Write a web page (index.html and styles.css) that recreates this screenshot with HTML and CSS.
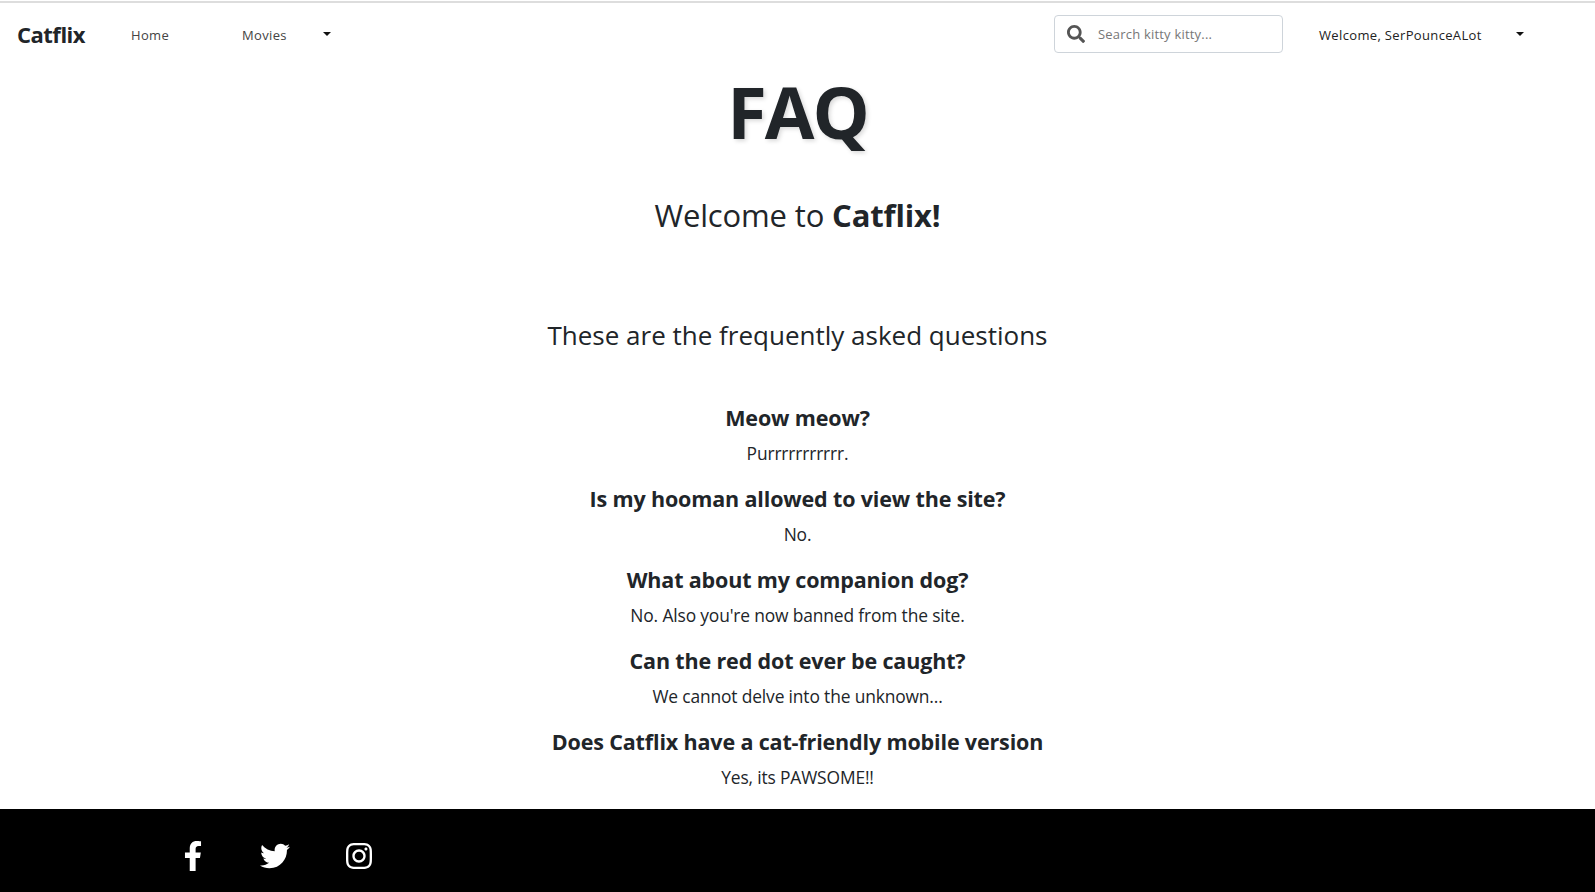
FILE: index.html
```html
<!DOCTYPE html>
<html>
<head>
<meta charset="utf-8">
<title>Catflix - FAQ</title>
<link rel="stylesheet" href="styles.css">
</head>
<body>
  <nav class="navbar">
    <a class="brand" href="#">Catflix</a>
    <a class="nav-link home-link" href="#">Home</a>
    <a class="nav-link movies-link" href="#">Movies</a>
    <span class="caret movies-caret"></span>
    <div class="search-box">
      <svg class="search-icon" viewBox="0 0 512 512"><path d="M505 442.700L405.300 343c-4.500-4.500-10.600-7-17-7H372c27.600-35.300 44-79.700 44-128C416 93.100 322.900 0 208 0S0 93.100 0 208s93.100 208 208 208c48.300 0 92.700-16.400 128-44v16.300c0 6.400 2.500 12.500 7 17l99.700 99.700c9.400 9.400 24.600 9.400 33.900 0l28.300-28.300c9.400-9.400 9.400-24.600.1-34zM208 336c-70.700 0-128-57.200-128-128 0-70.700 57.200-128 128-128 70.700 0 128 57.200 128 128 0 70.700-57.200 128-128 128z"/></svg>
      <input class="search-input" type="text" placeholder="Search kitty kitty...">
    </div>
    <a class="nav-link user-link" href="#">Welcome, SerPounceALot</a>
    <span class="caret user-caret"></span>
  </nav>

  <main class="content">
    <h1 class="page-title">FAQ</h1>
    <h2 class="welcome">Welcome to <b>Catflix!</b></h2>
    <h3 class="intro">These are the frequently asked questions</h3>

    <h4 class="question">Meow meow?</h4>
    <p class="answer">Purrrrrrrrrrr.</p>
    <h4 class="question">Is my hooman allowed to view the site?</h4>
    <p class="answer">No.</p>
    <h4 class="question">What about my companion dog?</h4>
    <p class="answer">No. Also you're now banned from the site.</p>
    <h4 class="question">Can the red dot ever be caught?</h4>
    <p class="answer">We cannot delve into the unknown...</p>
    <h4 class="question">Does Catflix have a cat-friendly mobile version</h4>
    <p class="answer">Yes, its PAWSOME!!</p>
  </main>

  <footer class="footer">
    <a class="social social-fb" href="#">
      <svg viewBox="0 0 320 512"><path d="M279.140 288l14.220-92.660h-88.910v-60.130c0-25.350 12.420-50.060 52.240-50.060h40.420V6.260S260.430 0 225.360 0c-73.220 0-121.080 44.380-121.080 124.720v70.620H22.890V288h81.390v224h100.170V288z"/></svg>
    </a>
    <a class="social social-tw" href="#">
      <svg viewBox="0 0 512 512"><path d="M459.370 151.716c.325 4.548.325 9.097.325 13.645 0 138.720-105.583 298.558-298.558 298.558-59.452 0-114.680-17.219-161.137-47.106 8.447.974 16.568 1.299 25.340 1.299 49.055 0 94.213-16.568 130.274-44.832-46.132-.975-84.792-31.188-98.112-72.772 6.498.974 12.995 1.624 19.818 1.624 9.421 0 18.843-1.300 27.614-3.573-48.081-9.747-84.143-51.980-84.143-102.985v-1.299c13.969 7.797 30.214 12.670 47.431 13.319-28.264-18.843-46.781-51.005-46.781-87.391 0-19.492 5.197-37.360 14.294-52.954 51.655 63.675 129.300 105.258 216.365 109.807-1.624-7.797-2.599-15.918-2.599-24.040 0-57.828 46.782-104.934 104.934-104.934 30.213 0 57.502 12.670 76.670 33.137 23.715-4.548 46.456-13.320 66.599-25.340-7.798 24.366-24.366 44.833-46.132 57.827 21.117-2.273 41.584-8.122 60.426-16.243-14.292 20.791-32.161 39.308-52.628 54.253z"/></svg>
    </a>
    <a class="social social-ig" href="#">
      <svg viewBox="0 0 448 512"><path d="M224.100 141c-63.600 0-114.900 51.300-114.900 114.900s51.300 114.900 114.900 114.900S339 319.500 339 255.900 287.700 141 224.100 141zm0 189.600c-41.100 0-74.700-33.500-74.700-74.700s33.500-74.700 74.700-74.700 74.700 33.500 74.700 74.700-33.600 74.700-74.700 74.700zm146.400-194.300c0 14.900-12 26.800-26.800 26.800-14.900 0-26.800-12-26.800-26.800s12-26.800 26.800-26.800 26.800 12 26.800 26.800zm76.100 27.200c-1.700-35.900-9.900-67.700-36.200-93.900-26.200-26.200-58-34.400-93.900-36.200-37-2.100-147.900-2.100-184.900 0-35.800 1.700-67.600 9.900-93.900 36.100s-34.400 58-36.200 93.900c-2.100 37-2.100 147.900 0 184.900 1.700 35.900 9.900 67.700 36.200 93.900s58 34.400 93.900 36.200c37 2.100 147.900 2.100 184.900 0 35.900-1.700 67.700-9.900 93.900-36.200 26.200-26.200 34.400-58 36.200-93.900 2.100-37 2.100-147.800 0-184.800zM398.800 388c-7.800 19.600-22.900 34.700-42.600 42.600-29.500 11.700-99.500 9-132.100 9s-102.700 2.600-132.100-9c-19.600-7.800-34.700-22.900-42.600-42.600-11.700-29.500-9-99.500-9-132.100s-2.600-102.700 9-132.100c7.800-19.600 22.900-34.700 42.600-42.600 29.500-11.700 99.500-9 132.100-9s102.700-2.600 132.100 9c19.600 7.800 34.700 22.900 42.600 42.600 11.700 29.500 9 99.500 9 132.100s2.700 102.700-9 132.100z"/></svg>
    </a>
  </footer>
</body>
</html>
```

FILE: styles.css
```css
* {
  box-sizing: border-box;
}

html,
body {
  height: 100%;
}

body {
  margin: 0;
  padding-top: 1px;
  display: flex;
  flex-direction: column;
  font-family: "Open Sans", "Noto Sans", sans-serif;
  color: #212529;
  background-color: #fff;
  overflow: hidden;
}

a {
  text-decoration: none;
}

/* top bar */
.navbar {
  display: flex;
  align-items: center;
  height: 64px;
  border-top: 2px solid #ddd;
  padding-left: 17px;
}

.brand {
  width: 114px;
  font-size: 22px;
  font-weight: 700;
  letter-spacing: -0.5px;
  color: #212529;
}

.nav-link {
  padding-top: 1px;
  font-size: 13px;
  letter-spacing: 0.35px;
  color: #444;
}

.home-link {
  width: 111px;
}

.movies-link {
  width: 81px;
}

.caret {
  width: 0;
  height: 0;
  border-top: 4px solid #111;
  border-left: 4px solid transparent;
  border-right: 4px solid transparent;
}

.search-box {
  display: flex;
  align-items: center;
  width: 229px;
  height: 38px;
  margin-left: 723px;
  padding-left: 12px;
  border: 1px solid #ced4da;
  border-radius: 4px;
}

.search-icon {
  width: 18px;
  height: 18px;
  fill: #555;
}

.search-input {
  flex: 1;
  width: 100px;
  margin-left: 11px;
  border: none;
  outline: none;
  font-family: inherit;
  font-size: 13px;
  letter-spacing: 0.2px;
  color: #495057;
}

.search-input::placeholder {
  color: #777;
}

.user-link {
  width: 197px;
  margin-left: 36px;
  color: #222;
}

/* faq */
.content {
  flex: 1;
  text-align: center;
}

.page-title {
  margin: 3px 0 0;
  font-size: 72px;
  line-height: 86px;
  font-weight: 700;
  letter-spacing: -2px;
  text-shadow: 2px 2px 4px rgba(0, 0, 0, 0.15);
}

.welcome {
  margin: 41px 0 0;
  font-size: 31px;
  line-height: 40px;
  font-weight: 400;
  letter-spacing: -0.15px;
}

.intro {
  margin: 80px 0 0;
  font-size: 26px;
  line-height: 40px;
  font-weight: 400;
}

.question {
  margin: 0;
  font-size: 21.500px;
  line-height: 29px;
  font-weight: 700;
  letter-spacing: -0.15px;
}

.intro + .question {
  margin-top: 48px;
}

.answer {
  margin: 7px 0 17px;
  font-size: 17.400px;
  line-height: 28px;
  font-weight: 400;
  letter-spacing: -0.15px;
  color: #212529;
}

/* bottom bar */
.footer {
  display: flex;
  align-items: center;
  height: 83px;
  padding-left: 183px;
  padding-top: 10px;
  background-color: #000;
}

.social {
  display: flex;
}

.social svg {
  fill: #fff;
  height: 30px;
}

.social-fb svg {
  width: 20px;
}

.social-tw {
  margin-left: 57px;
}

.social-tw svg {
  width: 30px;
}

.social-ig {
  margin-left: 56px;
}

.social-ig svg {
  width: 26px;
}
```
